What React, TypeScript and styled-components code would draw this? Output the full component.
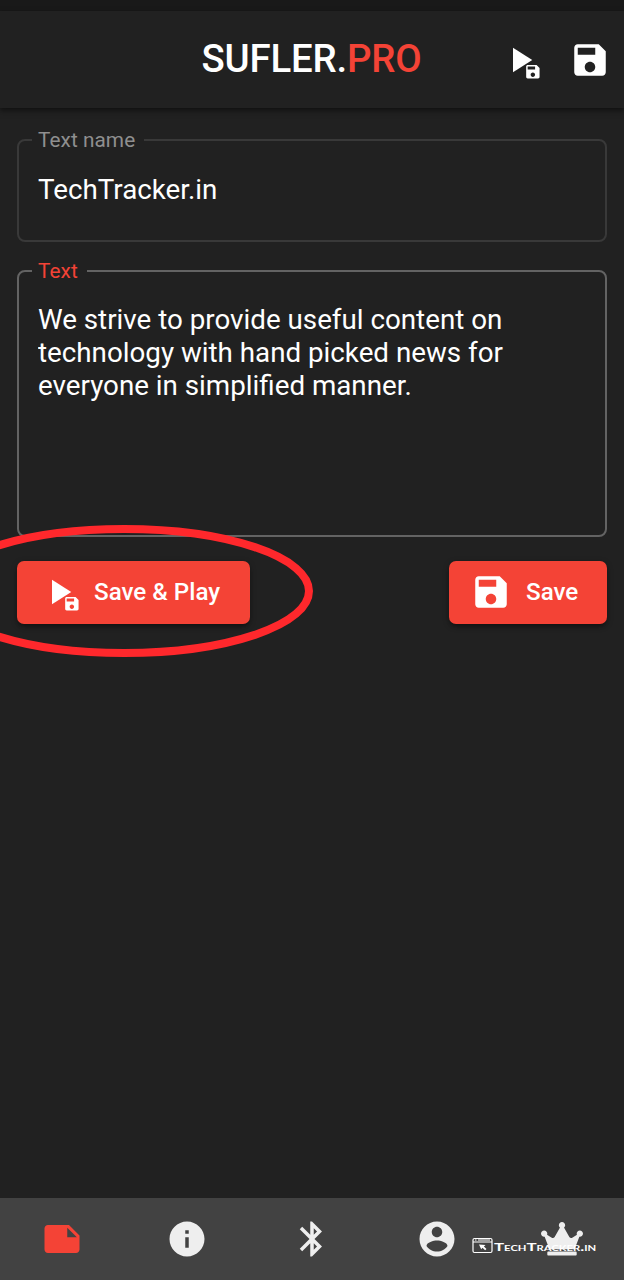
import React, { ReactNode } from "react";
import styled, { createGlobalStyle } from "styled-components";

const GlobalStyle = createGlobalStyle`
  * { box-sizing: border-box; }
  html { background: #212121; }
  body { margin: 0; font-family: Roboto, "Liberation Sans", sans-serif; color: #fff; }
`;

const Screen = styled.div`
  position: relative;
  display: flex;
  flex-direction: column;
  width: 624px;
  height: 1280px;
  overflow: hidden;
  background: #212121;
`;

const StatusBar = styled.div`
  height: 11px;
  flex: none;
  background: #191919;
`;

const AppBar = styled.header`
  display: grid;
  grid-template-columns: 1fr auto 1fr;
  align-items: center;
  flex: none;
  height: 97px;
  padding: 0 13px 0 12px;
  background: #212121;
  box-shadow: 0 3px 7px rgba(0, 0, 0, 0.36), 0 2px 3px rgba(0, 0, 0, 0.2);
`;

const Title = styled.h1`
  grid-column: 2;
  margin: 0;
  padding-bottom: 1px;
  font-size: 38.4px;
  line-height: 44px;
  font-weight: 500;
  letter-spacing: -0.2px;
`;

const Accent = styled.span`
  color: #f44336;
`;

const Actions = styled.div`
  display: flex;
  justify-content: flex-end;
  gap: 28px;
  color: #fff;
`;

const Icon = styled.svg<{ $width?: number; $height?: number }>`
  display: block;
  flex: none;
  width: ${(p) => p.$width ?? 42}px;
  height: ${(p) => p.$height ?? 42}px;
  fill: currentColor;
`;

const Form = styled.main`
  flex: 1;
  display: flex;
  flex-direction: column;
  padding: 20px 17px 0;
`;

const Field = styled.fieldset<{ $height: number; $active?: boolean }>`
  height: ${(p) => p.$height}px;
  min-width: 0;
  margin: 0 0 17px;
  padding: 0 19px;
  border: 2px solid ${(p) => (p.$active ? "#636363" : "#393939")};
  border-radius: 8px;
`;

const Legend = styled.legend<{ $active?: boolean }>`
  margin-left: -6px;
  padding: 0 9px 0 6px;
  font-size: 20.8px;
  line-height: 24px;
  letter-spacing: 0.05px;
  color: ${(p) => (p.$active ? "#f44336" : "#8f8f8f")};
`;

const Input = styled.textarea<{ $top: number }>`
  display: block;
  width: 100%;
  margin: 0;
  padding: ${(p) => p.$top}px 0 0;
  border: 0;
  outline: 0;
  resize: none;
  overflow: hidden;
  background: transparent;
  color: #fff;
  font: 400 27.75px/33px Roboto, "Liberation Sans", sans-serif;
`;

const ButtonRow = styled.div`
  display: flex;
  justify-content: space-between;
  margin-top: 7px;
`;

const Button = styled.button<{ $width: number }>`
  display: flex;
  align-items: center;
  gap: 14px;
  width: ${(p) => p.$width}px;
  height: 63px;
  padding: 0 0 1px 21px;
  border: 0;
  border-radius: 7px;
  background: #f44336;
  color: #fff;
  font: 500 24.2px/42px Roboto, "Liberation Sans", sans-serif;
  white-space: nowrap;
  box-shadow: 0 4px 4px -2px rgba(0, 0, 0, 0.3), 0 2px 6px rgba(0, 0, 0, 0.3);
`;

const NavBar = styled.nav`
  display: grid;
  grid-template-columns: repeat(5, 1fr);
  flex: none;
  height: 82px;
  background: #424242;
`;

const NavItem = styled.a<{ $active?: boolean }>`
  display: flex;
  align-items: center;
  justify-content: center;
  color: ${(p) => (p.$active ? "#f44336" : "#eee")};
`;

const Marker = styled.svg`
  position: absolute;
  left: 0;
  top: 515px;
  width: 330px;
  height: 150px;
  pointer-events: none;
`;

const Watermark = styled.div`
  position: absolute;
  left: 472px;
  top: 1237px;
  display: flex;
  align-items: center;
  gap: 1px;
  height: 17px;
  color: #fff;
`;

const WatermarkText = styled.span`
  font: 700 12px/17px Lato, "Liberation Sans", sans-serif;
  font-variant: small-caps;
  white-space: nowrap;
  transform: translateY(1px) scaleX(1.405);
  transform-origin: 0 50%;
`;

const SAVE =
  "M17 3H5c-1.11 0-2 .9-2 2v14c0 1.100.89 2 2 2h14c1.100 0 2-.9 2-2V7l-4-4zm-5 16c-1.660 0-3-1.340-3-3s1.340-3 3-3 3 1.340 3 3-1.340 3-3 3zm3-10H5V5h10v4z";

const SaveIcon = () => (
  <Icon viewBox="0 0 24 24">
    <path d={SAVE} />
  </Icon>
);

const SavePlayIcon = () => (
  <Icon viewBox="0 0 24 24">
    <path d="M8 5v14l11-7z" />
    <path d={SAVE} transform="translate(14.250 13.600) scale(0.425)" />
  </Icon>
);

const Path24 = ({ d }: { d: string }) => (
  <Icon viewBox="0 0 24 24">
    <path d={d} />
  </Icon>
);

const NAV: { id: string; icon: ReactNode }[] = [
  {
    id: "texts",
    icon: (
      <Path24 d="M22 10l-6-6H4c-1.100 0-2 .9-2 2v12.010c0 1.100.9 1.990 2 1.990l16-.010c1.100 0 2-.890 2-1.990v-8zm-7-4.500l5.500 5.500H15V5.500z" />
    ),
  },
  {
    id: "info",
    icon: (
      <Path24 d="M12 2C6.480 2 2 6.480 2 12s4.480 10 10 10 10-4.480 10-10S17.520 2 12 2zm1 15h-2v-6h2v6zm0-8h-2V7h2v2z" />
    ),
  },
  {
    id: "bluetooth",
    icon: (
      <Path24 d="M17.710 7.710L12 2h-1v7.590L6.410 5 5 6.410 10.590 12 5 17.590 6.410 19 11 14.410V22h1l5.710-5.710-4.300-4.290 4.300-4.290zM13 5.830l1.880 1.880L13 9.590V5.830zm1.880 10.460L13 18.170v-3.760l1.880 1.880z" />
    ),
  },
  {
    id: "account",
    icon: (
      <Path24 d="M12 2C6.480 2 2 6.480 2 12s4.480 10 10 10 10-4.480 10-10S17.520 2 12 2zm0 3c1.660 0 3 1.340 3 3s-1.340 3-3 3-3-1.340-3-3 1.340-3 3-3zm0 14.200c-2.500 0-4.710-1.280-6-3.220.030-1.990 4-3.080 6-3.080 1.990 0 5.970 1.090 6 3.080-1.290 1.940-3.500 3.220-6 3.220z" />
    ),
  },
  {
    id: "premium",
    icon: (
      <Icon viewBox="0 0 640 512" $width={42} $height={33.6}>
        <path d="M528 448H112c-8.800 0-16 7.200-16 16v32c0 8.800 7.200 16 16 16h416c8.800 0 16-7.200 16-16v-32c0-8.800-7.200-16-16-16zm64-320c-26.500 0-48 21.500-48 48 0 7.100 1.600 13.700 4.400 19.800L476 239.200c-15.400 9.200-35.300 4-44.200-11.600L350.300 85C361 76.200 368 63 368 48c0-26.500-21.500-48-48-48s-48 21.500-48 48c0 15 7 28.200 17.700 37l-81.500 142.600c-8.900 15.600-28.900 20.800-44.200 11.600l-72.300-43.400c2.700-6 4.400-12.700 4.400-19.800 0-26.500-21.500-48-48-48S0 149.500 0 176s21.500 48 48 48c2.600 0 5.200-.4 7.700-.8L128 416h384l72.300-192.800c2.500.4 5.100.8 7.700.8 26.500 0 48-21.500 48-48s-21.500-48-48-48z" />
      </Icon>
    ),
  },
];

export default function App() {
  return (
    <>
      <GlobalStyle />
      <Screen>
        <StatusBar />
        <AppBar>
          <Title>
            SUFLER.<Accent>PRO</Accent>
          </Title>
          <Actions>
            <SavePlayIcon />
            <SaveIcon />
          </Actions>
        </AppBar>
        <Form>
          <Field $height={114}>
            <Legend>Text name</Legend>
            <Input $top={21} rows={1} defaultValue="TechTracker.in" spellCheck={false} />
          </Field>
          <Field $height={278} $active>
            <Legend $active>Text</Legend>
            <Input
              $top={20}
              rows={6}
              defaultValue="We strive to provide useful content on technology with hand picked news for everyone in simplified manner."
              spellCheck={false}
            />
          </Field>
          <ButtonRow>
            <Button $width={233}>
              <SavePlayIcon />
              Save &amp; Play
            </Button>
            <Button $width={158}>
              <SaveIcon />
              Save
            </Button>
          </ButtonRow>
        </Form>
        <NavBar>
          {NAV.map((item, i) => (
            <NavItem key={item.id} $active={i === 0}>
              {item.icon}
            </NavItem>
          ))}
        </NavBar>
        <Marker viewBox="0 0 330 150">
          <ellipse cx="124" cy="76" rx="185" ry="62" fill="none" stroke="#ff282c" strokeWidth="8" />
        </Marker>
        <Watermark>
          <Icon viewBox="0 0 21 17" $width={21} $height={17}>
            <rect x="1" y="1.500" width="19" height="14" rx="1.500" fill="none" stroke="currentColor" strokeWidth="1.200" />
            <path d="M1 4.600h19v1H1zM3 2.600h1.500v1H3zM6 2.600h12v1H6z" />
            <path d="M7 7.500l6.500.6-1.600 1.300 2.600 2.500-1.400 1.400-2.600-2.500-1.300 1.500z" />
          </Icon>
          <WatermarkText>TechTracker.in</WatermarkText>
        </Watermark>
      </Screen>
    </>
  );
}
